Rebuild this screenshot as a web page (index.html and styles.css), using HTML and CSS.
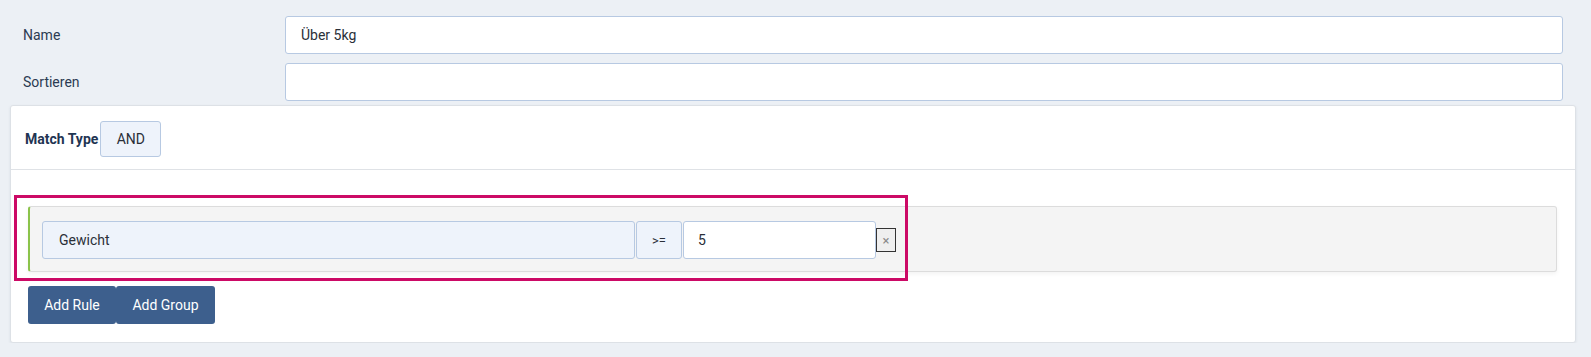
FILE: index.html
```html
<!DOCTYPE html>
<html lang="de">

<head>
  <meta charset="UTF-8">
  <meta name="viewport" content="width=device-width, initial-scale=1.0">
  <title>Regel bearbeiten</title>
  <link rel="stylesheet" href="styles.css">
</head>

<body>
  <div class="form">
    <label class="form-label" for="name">Name</label>
    <input class="form-input" id="name" type="text" value="Über 5kg">

    <label class="form-label" for="sort">Sortieren</label>
    <input class="form-input" id="sort" type="text" value="">
  </div>

  <div class="card">
    <div class="card-header">
      <span class="match-label">Match Type</span>
      <span class="match-select">AND</span>
    </div>

    <div class="card-body">
      <div class="rule-group">
        <div class="rule">
          <span class="rule-field">Gewicht</span>
          <span class="rule-operator">&gt;=</span>
          <input class="rule-value" type="text" value="5">
          <button class="rule-remove" type="button">×</button>
        </div>
      </div>

      <div class="actions">
        <button class="btn btn-rule" type="button">Add Rule</button>
        <button class="btn btn-group" type="button">Add Group</button>
      </div>

      <div class="highlight"></div>
    </div>
  </div>
</body>

</html>
```

FILE: styles.css
```css
* {
  box-sizing: border-box;
}

body {
  margin: 0;
  background-color: #ecf0f5;
  font-family: Roboto, "Liberation Sans", sans-serif;
  font-size: 14px;
  color: #2a3a4f;
}

.form {
  display: grid;
  grid-template-columns: 262px 1fr;
  row-gap: 9px;
  align-items: center;
  padding: 16px 28px 0 23px;
}

.form-label {
  color: #2b3b52;
}

.form-input {
  height: 38px;
  border: 1px solid #b7c9e2;
  border-radius: 3px;
  background-color: #fff;
  padding: 0 15px;
  font-family: inherit;
  font-size: 14px;
  color: #2a2f38;
  outline: none;
}

.card {
  position: relative;
  margin: 4px 15px 0 10px;
  border: 1px solid #dde1e6;
  border-radius: 3px;
  background-color: #fff;
  box-shadow: 0 1px 3px rgba(30, 50, 80, 0.08);
}

.card-header {
  display: flex;
  align-items: center;
  padding: 15px 14px 12px;
  border-bottom: 1px solid #dfe2e6;
}

.match-label {
  font-weight: 700;
  color: #1f3553;
}

.match-select {
  width: 61px;
  height: 36px;
  display: flex;
  align-items: center;
  justify-content: center;
  margin-left: 2px;
  border: 1px solid #b7c9e2;
  border-radius: 3px;
  background-color: #eef3fb;
  color: #2a2f38;
}

.card-body {
  padding: 36px 18px 18px 17px;
}

.rule-group {
  border: 1px solid #dcdcdc;
  border-left: 2px solid #8bc34a;
  border-radius: 3px;
  background-color: #f4f4f4;
  padding: 14px 12px 12px;
  box-shadow: 0 2px 4px rgba(0, 0, 0, 0.05);
}

.rule {
  display: flex;
  align-items: center;
}

.rule-field,
.rule-operator {
  height: 38px;
  display: flex;
  align-items: center;
  border: 1px solid #b7c9e2;
  border-radius: 3px;
  background-color: #eef3fb;
  color: #2a2f38;
}

.rule-field {
  width: 593px;
  padding-left: 16px;
}

.rule-operator {
  width: 46px;
  margin-left: 1px;
  justify-content: center;
  font-size: 13px;
}

.rule-value {
  width: 193px;
  height: 38px;
  margin-left: 1px;
  border: 1px solid #b7c9e2;
  border-radius: 3px;
  background-color: #fff;
  padding: 0 14px;
  font-family: inherit;
  font-size: 14px;
  color: #2a2f38;
  outline: none;
}

.rule-remove {
  width: 20px;
  height: 24px;
  padding: 0;
  border: 1px solid #333;
  border-radius: 0;
  background-color: #efefef;
  color: #8a8a8a;
  font-family: inherit;
  font-size: 13px;
}

.actions {
  display: flex;
  margin-top: 14px;
}

.btn {
  height: 38px;
  border: none;
  border-radius: 3px;
  background-color: #3d5f8d;
  color: #fff;
  font-family: inherit;
  font-size: 14px;
  font-weight: 400;
}

.btn-rule {
  width: 88px;
}

.btn-group {
  width: 99px;
}

.highlight {
  position: absolute;
  left: 3px;
  top: 89px;
  width: 894px;
  height: 86px;
  border: 3px solid #cc0a66;
  pointer-events: none;
}
```
